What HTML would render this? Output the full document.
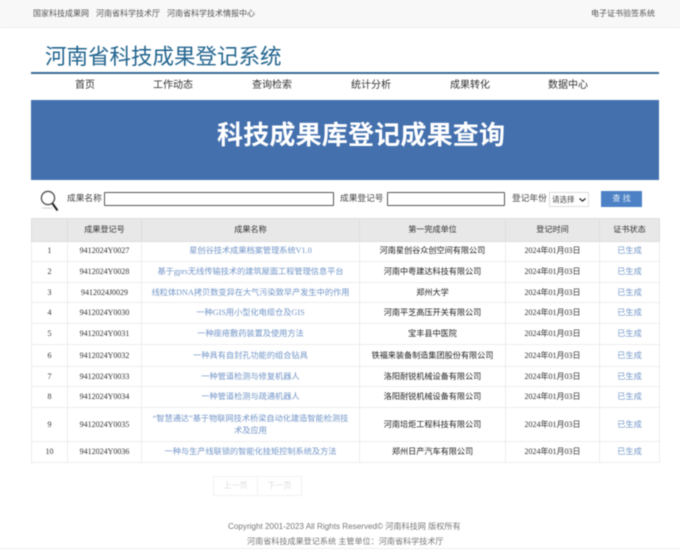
<!DOCTYPE html>
<html lang="zh">
<head>
<meta charset="utf-8">
<title>河南省科技成果登记系统</title>
<style>
html,body{margin:0;padding:0;background:#fff}
body{width:680px;height:550px;overflow:hidden}
#w{width:680px;height:550px;position:relative;overflow:hidden;filter:blur(.45px);font-family:"Liberation Sans","Noto Sans CJK SC",sans-serif;color:#333}
.a{position:absolute;white-space:nowrap}
#top{left:0;top:0;width:680px;height:27px;background:#f8f8f8;border-bottom:1px solid #eee}
.t{font-size:8px;line-height:12px;top:8px;color:#555}
#title{left:45px;top:41px;font-size:21.5px;line-height:30px;color:#23658f;font-family:"Noto Sans CJK SC",sans-serif}
#rule{left:31px;top:72px;width:628px;height:2px;background:#3a6b94}
.n{top:79px;font-size:10px;line-height:14px;color:#333;width:60px;text-align:center}
#ban{left:31px;top:100px;width:628px;height:80px;background:#4470ad}
#bt{left:217px;top:119px;font-size:26px;line-height:32px;font-weight:700;color:#fff;letter-spacing:.2px}
.l{top:192px;font-size:8.7px;line-height:12px;color:#444}
.i{top:192px;height:12px;border:1px solid #555;background:#fff;box-sizing:content-box;border-radius:1px}
#sel{left:549px;top:192px;width:38px;height:13px;border:1px solid #ddd;font-size:7.5px;line-height:13px;color:#444;text-indent:2px}
#btn{left:601px;top:191px;width:41px;height:16px;background:#4c82c5;color:#e8f0fa;font-size:8px;line-height:16px;text-align:center}
table{position:absolute;left:31px;top:218px;width:628px;border-collapse:collapse;table-layout:fixed;border:1px solid #e4e4e4;font-family:"Liberation Serif","Noto Sans CJK SC",serif}
td,th{border:1px solid #ececec;padding:0 4px 1px;text-align:center;font-size:8px;line-height:12px;font-weight:400;color:#333;box-sizing:border-box}
tr.z td{padding:0 4px}
th{background:#e8e8e8;height:23px;font-family:"Liberation Sans","Noto Sans CJK SC",sans-serif;font-size:8.1px;border-color:#ddd;padding:0 4px}
td.b{color:#7396c8;font-size:8.2px;font-family:"Liberation Serif","Noto Sans CJK SC",serif}
td.c{font-family:"Liberation Sans","Noto Sans CJK SC",sans-serif;font-size:8.15px;color:#222}
.pg{top:476px;height:18px;width:43px;border:1px solid #f3f3f3;color:#ddd;font-size:8px;line-height:18px;text-align:center}
.f{font-size:8.15px;line-height:12px;color:#777}
</style>
</head>
<body>
<div id="w">
<div class="a" id="top"></div>
<div class="a t" style="left:33px">国家科技成果网</div>
<div class="a t" style="left:96px">河南省科学技术厅</div>
<div class="a t" style="left:167px">河南省科学技术情报中心</div>
<div class="a t" style="left:591px">电子证书验签系统</div>
<div class="a" id="title">河南省科技成果登记系统</div>
<div class="a" id="rule"></div>
<div class="a n" style="left:55px">首页</div>
<div class="a n" style="left:143px">工作动态</div>
<div class="a n" style="left:242px">查询检索</div>
<div class="a n" style="left:341px">统计分析</div>
<div class="a n" style="left:440px">成果转化</div>
<div class="a n" style="left:538px">数据中心</div>
<div class="a" id="ban"></div>
<div class="a" id="bt">科技成果库登记成果查询</div>
<svg class="a" style="left:40px;top:188px" width="20" height="24" viewBox="0 0 20 24"><circle cx="8" cy="10" r="6.6" fill="none" stroke="#444" stroke-width="1.2"/><path d="M12.5 15.5l5 7" stroke="#222" stroke-width="2" fill="none"/><path d="M2 20h10" stroke="#ddd" stroke-width="1.5"/></svg>
<div class="a l" style="left:67px">成果名称</div>
<div class="a i" style="left:104px;width:228px"></div>
<div class="a l" style="left:340px">成果登记号</div>
<div class="a i" style="left:387px;width:116px"></div>
<div class="a l" style="left:512px">登记年份</div>
<div class="a" id="sel">请选择<svg style="position:absolute;left:29px;top:5px" width="7" height="4" viewBox="0 0 7 4"><path d="M.5.5l3 2.6 3-2.6" fill="none" stroke="#222" stroke-width="1.2"/></svg></div>
<div class="a" id="btn">查 找</div>
<table>
<colgroup><col style="width:36px"><col style="width:74px"><col style="width:218px"><col style="width:146px"><col style="width:94px"><col style="width:60px"></colgroup>
<tr><th></th><th>成果登记号</th><th>成果名称</th><th>第一完成单位</th><th>登记时间</th><th>证书状态</th></tr>
<tr style="height:20px"><td>1</td><td>9412024Y0027</td><td class="b">星创谷技术成果档案管理系统V1.0</td><td class="c">河南星创谷众创空间有限公司</td><td>2024年01月03日</td><td class="b">已生成</td></tr>
<tr style="height:21px"><td>2</td><td>9412024Y0028</td><td class="b">基于gprs无线传输技术的建筑屋面工程管理信息平台</td><td class="c">河南中粤建达科技有限公司</td><td>2024年01月03日</td><td class="b">已生成</td></tr>
<tr class="z" style="height:20px"><td>3</td><td>9412024J0029</td><td class="b">线粒体DNA拷贝数变异在大气污染致早产发生中的作用</td><td class="c">郑州大学</td><td>2024年01月03日</td><td class="b">已生成</td></tr>
<tr class="z" style="height:21px"><td>4</td><td>9412024Y0030</td><td class="b">一种GIS用小型化电缆仓及GIS</td><td class="c">河南平芝高压开关有限公司</td><td>2024年01月03日</td><td class="b">已生成</td></tr>
<tr class="z" style="height:21px"><td>5</td><td>9412024Y0031</td><td class="b">一种座疮敷药装置及使用方法</td><td class="c">宝丰县中医院</td><td>2024年01月03日</td><td class="b">已生成</td></tr>
<tr class="z" style="height:22px"><td>6</td><td>9412024Y0032</td><td class="b">一种具有自封孔功能的组合钻具</td><td class="c">铁福来装备制造集团股份有限公司</td><td>2024年01月03日</td><td class="b">已生成</td></tr>
<tr class="z" style="height:20px"><td>7</td><td>9412024Y0033</td><td class="b">一种管道检测与修复机器人</td><td class="c">洛阳耐锐机械设备有限公司</td><td>2024年01月03日</td><td class="b">已生成</td></tr>
<tr class="z" style="height:21px"><td>8</td><td>9412024Y0034</td><td class="b">一种管道检测与疏通机器人</td><td class="c">洛阳耐锐机械设备有限公司</td><td>2024年01月03日</td><td class="b">已生成</td></tr>
<tr class="z" style="height:34px"><td>9</td><td>9412024Y0035</td><td class="b">“智慧通达”基于物联网技术桥梁自动化建造智能检测技<br>术及应用</td><td class="c">河南培炬工程科技有限公司</td><td>2024年01月03日</td><td class="b">已生成</td></tr>
<tr style="height:21px"><td>10</td><td>9412024Y0036</td><td class="b">一种与生产线联锁的智能化挂矩控制系统及方法</td><td class="c">郑州日产汽车有限公司</td><td>2024年01月03日</td><td class="b">已生成</td></tr>
</table>
<div class="a pg" style="left:213px">上一页</div>
<div class="a pg" style="left:257px">下一页</div>
<div class="a f" style="top:521px;left:228px">Copyright 2001-2023 All Rights Reserved© 河南科技网 版权所有</div>
<div class="a f" style="top:536px;left:247px;font-size:8.1px">河南省科技成果登记系统 主管单位：河南省科学技术厅</div>
<div class="a" style="left:0;top:548px;width:680px;height:1px;background:#eee"></div>
</div>
</body>
</html>
